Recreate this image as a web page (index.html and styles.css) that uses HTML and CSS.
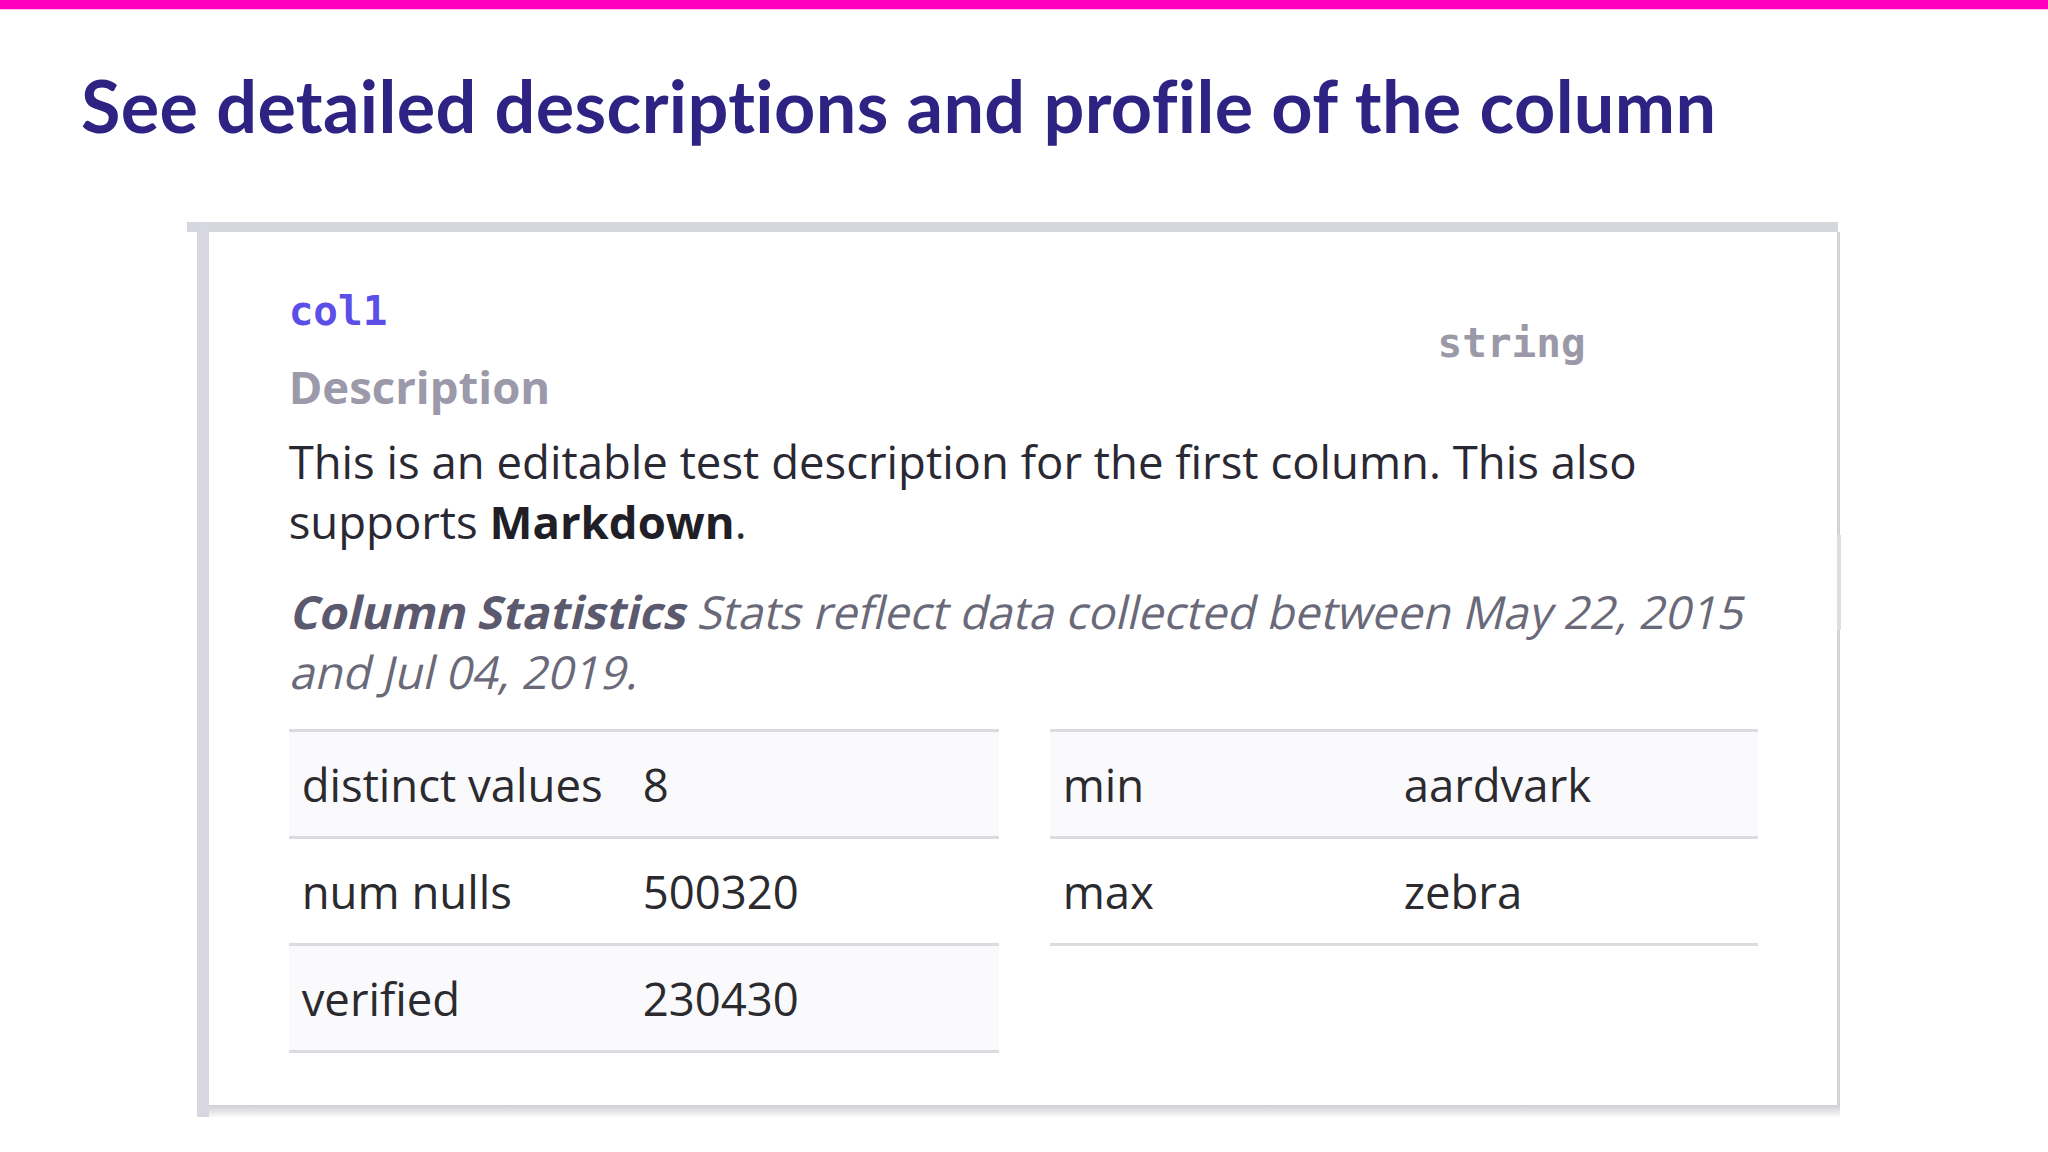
FILE: index.html
```html
<!DOCTYPE html>
<html lang="en">
<head>
<meta charset="utf-8">
<title>Column detail</title>
<link rel="stylesheet" href="styles.css">
</head>
<body>
<div class="accent"></div>
<h1 class="title">See detailed descriptions and profile of the column</h1>
<div class="frame">
  <div class="topbar"></div>
  <div class="frame-row">
    <div class="leftbar"></div>
    <div class="card-col">
      <div class="card">
        <div class="header">
          <span class="col-name">col1</span>
          <span class="col-type">string</span>
        </div>
        <div class="section-label">Description</div>
        <p class="desc">This is an editable test description for the first column. This also supports <strong>Markdown</strong>.</p>
        <p class="stats-note"><span class="oblique-line"><strong>Column Statistics</strong> Stats reflect data collected between May 22, 2015</span> <span class="oblique-line">and Jul 04, 2019.</span></p>
        <div class="stats">
          <div class="stat-table">
            <div class="stat-row"><span class="stat-key">distinct values</span><span class="stat-val">8</span></div>
            <div class="stat-row"><span class="stat-key">num nulls</span><span class="stat-val">500320</span></div>
            <div class="stat-row"><span class="stat-key">verified</span><span class="stat-val">230430</span></div>
          </div>
          <div class="stat-table">
            <div class="stat-row"><span class="stat-key">min</span><span class="stat-val">aardvark</span></div>
            <div class="stat-row"><span class="stat-key">max</span><span class="stat-val">zebra</span></div>
          </div>
        </div>
      </div>
      <div class="shadow"></div>
    </div>
    <div class="rightrail">
      <div class="rail-thumb"></div>
    </div>
  </div>
</div>
</body>
</html>
```
FILE: styles.css
```css
html, body {
  margin: 0;
  padding: 0;
  background: #ffffff;
}
body {
  width: 2048px;
  height: 1152px;
  overflow: hidden;
  font-family: "Open Sans", "Noto Sans", sans-serif;
}
.accent {
  height: 9px;
  background: #ff00bf;
  box-shadow: 0 1px 1px rgba(255, 0, 191, 0.25);
}
.title {
  margin: 53px 0 0 81px;
  font-family: Lato, "Open Sans", sans-serif;
  font-weight: 700;
  font-size: 72px;
  line-height: 86px;
  color: #2e2283;
  letter-spacing: 0.35px;
  font-variant-ligatures: none;
  font-feature-settings: "liga" 0, "clig" 0;
}
.frame {
  margin-top: 74px;
  margin-left: 187px;
  width: 1658px;
  display: flex;
  flex-direction: column;
}
.topbar {
  height: 10px;
  width: 1651px;
  background: #d6d6dd;
}
.frame-row {
  display: flex;
  margin-top: -10px;
}
.leftbar {
  width: 13px;
  margin-left: 10px;
  background: #d7d7e1;
}
.card-col {
  display: flex;
  flex-direction: column;
  width: 1631px;
  margin-top: 10px;
}
.card {
  background: #ffffff;
  border-right: 3px solid #d2d2d8;
  padding: 55px 79px 52px 80px;
}
.shadow {
  height: 12px;
  background: linear-gradient(#cfcfd5, #ececef 70%, #fbfbfc);
}
.rightrail {
  width: 6px;
  display: flex;
  flex-direction: column;
  margin-top: 10px;
}
.rail-thumb {
  margin-top: 303px;
  height: 95px;
  width: 4px;
  margin-left: -3px;
  background: #dedee2;
}
.header {
  display: flex;
  align-items: flex-start;
  justify-content: space-between;
  padding-right: 172px;
  height: 48px;
}
.col-name, .col-type {
  font-family: "DejaVu Sans Mono", "Liberation Mono", monospace;
  font-weight: 700;
  font-size: 41px;
}
.col-name {
  color: #5b4fe8;
  line-height: 48px;
}
.col-type {
  color: #9b99a8;
  line-height: 38px;
  margin-top: 37px;
}
.section-label {
  margin-top: 27px;
  font-weight: 700;
  font-size: 45.5px;
  line-height: 48px;
  color: #9b99aa;
}
.desc {
  margin: 21px 0 0;
  font-size: 45.5px;
  line-height: 60px;
  color: #2a2933;
}
.desc strong {
  font-weight: 700;
  color: #201f27;
}
.stats-note {
  margin: 30px 0 0;
  font-size: 45.5px;
  line-height: 60px;
  font-style: normal;
  color: #6a6979;
}
.oblique-line {
  display: block;
  transform: skewX(-13deg);
  transform-origin: 0 47px;
  white-space: nowrap;
}
.stats-note strong {
  font-weight: 700;
  color: #5b596d;
}
.stats {
  margin-top: 28px;
  display: grid;
  grid-template-columns: 710px 708px;
  column-gap: 51px;
  align-items: start;
}
.stat-table {
  border-top: 3px solid #dcdce0;
}
.stat-row {
  display: grid;
  grid-template-columns: 354px 1fr;
  align-items: center;
  height: 104px;
  border-bottom: 3px solid #dcdce0;
  font-size: 45.5px;
  line-height: 60px;
  color: #2a2a2f;
}
.stat-row:nth-child(odd) {
  background: #fafafc;
}
.stat-key {
  padding-left: 13px;
}
```
